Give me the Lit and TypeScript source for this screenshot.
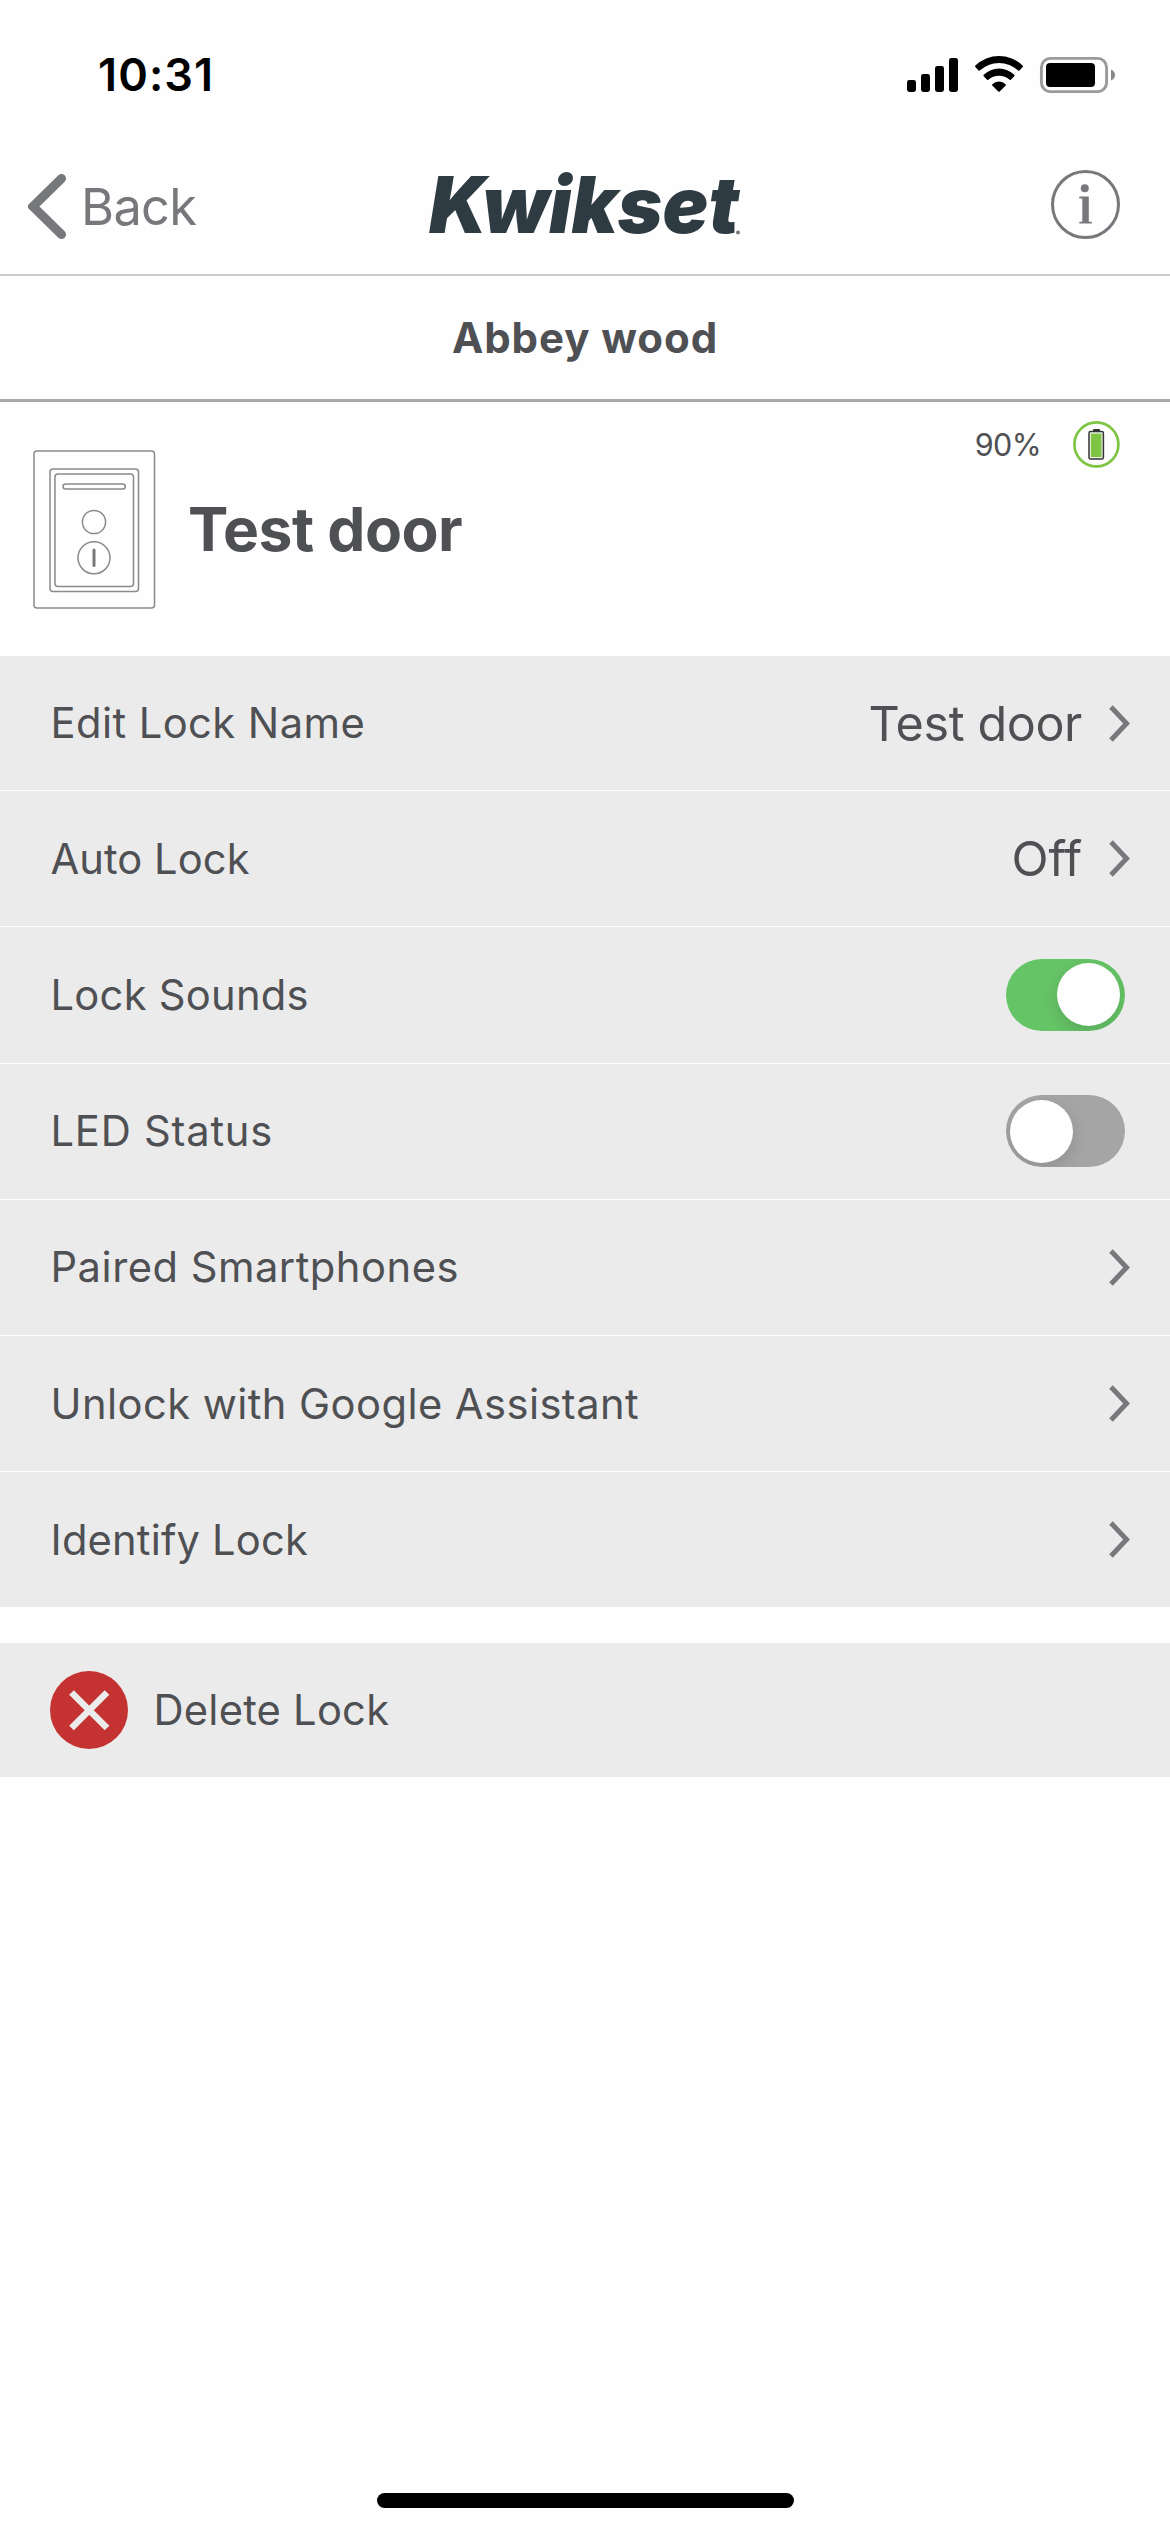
import { LitElement, html, css, svg, nothing } from "lit";
import { customElement, property } from "lit/decorators.js";
import { classMap } from "lit/directives/class-map.js";
import { styleMap } from "lit/directives/style-map.js";

interface Setting {
  label: string;
  tracking: number;
  value?: string;
  valueTracking?: number;
  toggle?: boolean;
}

const SETTINGS: Setting[] = [
  { label: "Edit Lock Name", tracking: 0.43, value: "Test door", valueTracking: -0.38 },
  { label: "Auto Lock", tracking: 0.05, value: "Off", valueTracking: -0.2 },
  { label: "Lock Sounds", tracking: 0.25, toggle: true },
  { label: "LED Status", tracking: 0.78, toggle: false },
  { label: "Paired Smartphones", tracking: 0.5 },
  { label: "Unlock with Google Assistant", tracking: 0.43 },
  { label: "Identify Lock", tracking: 0.18 },
];

const px = (n: number) => `${n}px`;

@customElement("status-bar")
class StatusBar extends LitElement {
  static styles = css`
    :host {
      display: flex;
      align-items: center;
      justify-content: space-between;
      box-sizing: border-box;
      height: 138px;
      padding: 11px 55px 0 98px;
      color: #000;
    }
    .time {
      font-size: 45px;
      font-weight: 600;
      letter-spacing: 1.1px;
    }
    .icons {
      display: block;
    }
  `;
  render() {
    return html`
      <span class="time">10:31</span>
      <svg class="icons" width="208" height="37" viewBox="0 0 208 37">
        <rect x="0" y="24" width="9" height="12" rx="2.4" />
        <rect x="14" y="18" width="9" height="18" rx="2.4" />
        <rect x="28" y="10" width="9" height="26" rx="2.4" />
        <rect x="42" y="2" width="9" height="34" rx="2.4" />
        <path d="M68.4 9.6A34 34 0 0 1 115.6 9.6Q116.3 10.4 115.6 11.1L112.5 14.6Q111.9 15.1 111.3 14.6A28 28 0 0 0 72.7 14.6Q72.1 15.1 71.5 14.6L68.4 11.1Q67.7 10.4 68.4 9.6Z" />
        <path d="M76.7 18.8A22 22 0 0 1 107.3 18.8Q108 19.6 107.3 20.3L103.9 23.8Q103.3 24.3 102.7 23.8A15.8 15.8 0 0 0 81.3 23.8Q80.7 24.3 80.1 23.8L76.7 20.3Q76 19.6 76.7 18.8Z" />
        <path d="M85.3 28.2A10 10 0 0 1 98.7 28.2Q99.3 28.9 98.7 29.5L92.7 35.5Q92 36.2 91.3 35.5L85.3 29.5Q84.7 28.9 85.3 28.2Z" />
        <rect x="134.4" y="2.4" width="65.2" height="33.2" rx="9" fill="none" stroke="#9a9a9a" stroke-width="2.9" />
        <rect x="139" y="7" width="49" height="24" rx="4" />
        <path d="M204 13.5Q208 15 208 19T204 24.5Z" fill="#8a8a8a" />
      </svg>
    `;
  }
}

@customElement("nav-bar")
class NavBar extends LitElement {
  static styles = css`
    :host {
      display: grid;
      grid-template-columns: 1fr auto 1fr;
      align-items: center;
      box-sizing: border-box;
      height: 138px;
      padding: 0 28px;
      border-bottom: 2px solid #cbcbcb;
      color: #77787b;
    }
    svg {
      display: block;
    }
    .back {
      display: flex;
      align-items: center;
      gap: 15px;
      font-size: 50.5px;
      font-weight: 400;
      letter-spacing: -0.65px;
    }
    .logo {
      overflow: visible;
      font-family: Inter, "Open Sans", sans-serif;
      font-size: 78px;
      font-weight: 900;
      font-style: italic;
      fill: #2f3b43;
    }
    .info {
      justify-self: end;
      margin: -3px 22px 0 0;
    }
    .info-mark {
      fill: #77787b;
    }
  `;
  render() {
    return html`
      <div class="back">
        <svg width="38" height="65" viewBox="0 0 38 65">
          <path d="M33.5 4.5L5 32.5L33.5 60.5" fill="none" stroke="#77787b" stroke-width="9" stroke-linecap="round" />
        </svg>
        <span>Back</span>
      </div>
      <svg class="logo" width="312" height="60" viewBox="0 0 312 60">
        <text x="0" y="56.9" textLength="310" lengthAdjust="spacingAndGlyphs">Kwikset</text>
        <circle cx="309" cy="56.5" r="2" fill="#77787b" />
      </svg>
      <svg class="info" width="69" height="69" viewBox="0 0 69 69">
        <circle cx="34.5" cy="34.5" r="33" fill="none" stroke="#77787b" stroke-width="3" />
        <circle class="info-mark" cx="33.8" cy="18.3" r="4" />
        <path class="info-mark" d="M28.3 26.5H37.8V51.7H40.8V53.6H28.3V51.7H31.3V28.6H28.3Z" />
      </svg>
    `;
  }
}

@customElement("lock-header")
class LockHeader extends LitElement {
  static styles = css`
    :host {
      display: flex;
      align-items: center;
      box-sizing: border-box;
      height: 254px;
      padding: 0 50px 0 33px;
    }
    svg {
      display: block;
    }
    .name {
      margin-left: 32px;
      font-size: 60.5px;
      font-weight: 700;
      letter-spacing: -0.55px;
    }
    .battery {
      display: flex;
      align-items: center;
      align-self: flex-start;
      gap: 32px;
      margin: 19px 0 0 auto;
      font-size: 30.5px;
      letter-spacing: -0.6px;
    }
  `;
  render() {
    return html`
      <svg width="123" height="159" viewBox="0 0 123 159" fill="none" stroke="#8a8a8c" stroke-width="1.5">
        <rect x="1" y="1" width="120.5" height="157" rx="3" />
        <rect x="17" y="19" width="88.5" height="122.5" rx="3" />
        <rect x="22" y="24" width="78.5" height="112.5" rx="3" />
        <rect x="30" y="34" width="62.3" height="5" rx="2.5" />
        <circle cx="61" cy="72" r="11.6" />
        <circle cx="61" cy="107.8" r="16" />
        <path d="M61 100V115.5" stroke-width="3" stroke="#77787b" stroke-linecap="round" />
      </svg>
      <span class="name">Test door</span>
      <div class="battery">
        <span>90%</span>
        <svg width="47" height="47" viewBox="0 0 47 47">
          <circle cx="23.4" cy="23.4" r="22" fill="none" stroke="#7dc542" stroke-width="2.7" />
          <rect x="20" y="8" width="7" height="3" rx="1" fill="#333" />
          <rect x="16" y="10.6" width="14.4" height="27.4" rx="1.6" fill="#eef3ea" stroke="#333" stroke-width="1.5" />
          <rect x="17.9" y="12.6" width="10.6" height="23.4" fill="#7dc542" />
        </svg>
      </div>
    `;
  }
}

@customElement("toggle-switch")
class ToggleSwitch extends LitElement {
  @property({ type: Boolean }) on = false;
  static styles = css`
    .track {
      display: flex;
      align-items: center;
      box-sizing: border-box;
      width: 119px;
      height: 72px;
      padding: 0 5px 0 4px;
      border-radius: 36px;
      background: #a5a5a5;
      overflow: hidden;
    }
    .track.on {
      justify-content: flex-end;
      background: #65c466;
    }
    .knob {
      width: 63px;
      height: 63px;
      border-radius: 50%;
      background: #fefefe;
      box-shadow: 0 6px 16px rgba(0, 0, 0, 0.13);
    }
  `;
  render() {
    return html`<div class=${classMap({ track: true, on: this.on })}><div class="knob"></div></div>`;
  }
}

@customElement("app-root")
class AppRoot extends LitElement {
  static styles = css`
    :host {
      display: flex;
      flex-direction: column;
      box-sizing: border-box;
      width: 1170px;
      height: 2532px;
      background: #fefefe;
      color: #4f5054;
      font-family: Inter, "Liberation Sans", sans-serif;
      white-space: nowrap;
    }
    .home {
      display: flex;
      align-items: center;
      justify-content: center;
      box-sizing: border-box;
      height: 126px;
      padding-bottom: 1px;
      border-bottom: 3px solid #a9a9a9;
      font-size: 42px;
      font-weight: 700;
      letter-spacing: 0.92px;
    }
    .row {
      display: flex;
      align-items: center;
      box-sizing: border-box;
      height: 136.25px;
      padding: 0 40px 0 50.5px;
      border-bottom: 1px solid #fdfdfd;
      background: #ebebeb;
      font-size: 41.7px;
    }
    .row.first {
      height: 135px;
    }
    .row.last {
      height: 134.75px;
      border-bottom: none;
    }
    .row.switch {
      padding-right: 45px;
    }
    .label {
      flex: 1;
    }
    .value {
      margin-right: 27px;
      font-size: 48.5px;
    }
    .chevron {
      display: block;
    }
    .delete {
      display: flex;
      align-items: center;
      gap: 25.5px;
      height: 134px;
      margin-top: 36px;
      padding-left: 50px;
      background: #ebebeb;
      font-size: 41.7px;
      letter-spacing: 0.22px;
    }
    .indicator {
      align-self: center;
      width: 417px;
      height: 15px;
      margin: auto 0 24px;
      border-radius: 8px;
      background: #000;
    }
  `;

  private chevron() {
    return html`<svg class="chevron" width="21" height="37" viewBox="0 0 21 37">
      ${svg`<path d="M2 2L17.6 18.5L2 35" fill="none" stroke="#77787b" stroke-width="4.9" />`}
    </svg>`;
  }

  private row(s: Setting, i: number) {
    const isSwitch = s.toggle !== undefined;
    const classes = { row: true, switch: isSwitch, first: i === 0, last: i === SETTINGS.length - 1 };
    return html`<div class=${classMap(classes)}>
      <span class="label" style=${styleMap({ letterSpacing: px(s.tracking) })}>${s.label}</span>
      ${s.value
        ? html`<span class="value" style=${styleMap({ letterSpacing: px(s.valueTracking ?? 0) })}>${s.value}</span>`
        : nothing}
      ${isSwitch ? html`<toggle-switch ?on=${s.toggle}></toggle-switch>` : this.chevron()}
    </div>`;
  }

  render() {
    return html`
      <status-bar></status-bar>
      <nav-bar></nav-bar>
      <div class="home">Abbey wood</div>
      <lock-header></lock-header>
      <div>${SETTINGS.map((s, i) => this.row(s, i))}</div>
      <div class="delete">
        <svg width="78" height="78" viewBox="0 0 78 78">
          <circle cx="39" cy="39" r="39" fill="#c43331" />
          <path d="M21.5 21.5L57 57M57 21.5L21.5 57" stroke="#ebebeb" stroke-width="6.6" />
        </svg>
        <span>Delete Lock</span>
      </div>
      <div class="indicator"></div>
    `;
  }
}
